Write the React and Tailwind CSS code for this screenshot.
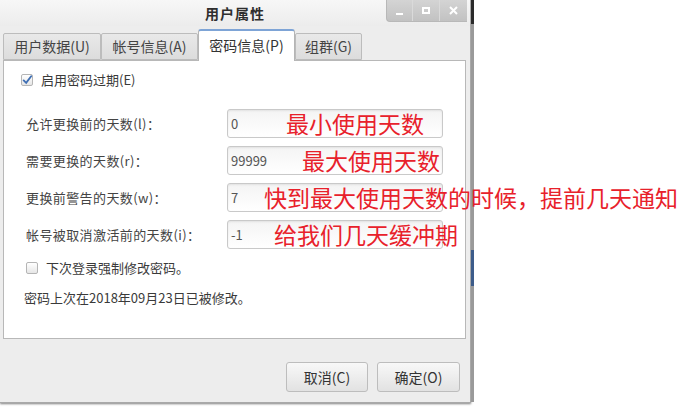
import React from "react";

const font = { fontFamily: '"Noto Sans CJK SC", "Noto Sans", sans-serif' };

const rows = [
  { label: "允许更换前的天数(l)：", value: "0", note: "最小使用天数", left: "left-[265px]" },
  { label: "需要更换的天数(r)：", value: "99999", note: "最大使用天数", left: "left-[281px]" },
  { label: "更换前警告的天数(w)：", value: "7", note: "快到最大使用天数的时候，提前几天通知", left: "left-[243px]" },
  { label: "帐号被取消激活前的天数(i)：", value: "-1", note: "给我们几天缓冲期", left: "left-[253px]" },
];

const tabs = [
  { label: "用户数据(U)", w: "w-[98px]" },
  { label: "帐号信息(A)", w: "w-[97px]" },
  { label: "密码信息(P)", w: "w-[97px]", active: true },
  { label: "组群(G)", w: "w-[67px]" },
];

function CheckBox({ checked }) {
  return (
    <span className="w-[12px] h-[12px] rounded-[2px] border border-[#b5b5b5] bg-gradient-to-b from-white to-[#e6e6e6] flex items-center justify-center">
      {checked && (
        <svg width="12" height="12" viewBox="0 0 12 12">
          <path d="M2 6.5 L5 9.5 L11 1.5" fill="none" stroke="#3f6fb4" strokeWidth="2.2" strokeLinecap="round" />
        </svg>
      )}
    </span>
  );
}

export default function App() {
  return (
    <div className="w-[688px] h-[420px] bg-white flex text-[#3a3a3a]" style={font}>
      {/* Dialog window */}
      <div className="w-[471px] h-[403px] bg-[#ededed] border-r border-b border-[#a9a9a9] shadow-[0_1px_2px_rgba(0,0,0,0.5)] flex flex-col">
        {/* Title bar */}
        <div className="relative h-[26px] bg-gradient-to-b from-[#f7f7f7] to-[#ececec] flex items-center justify-center">
          <span className="text-[14px] font-bold text-[#2e2e2e] tracking-[1px]">用户属性</span>
          <div className="absolute right-[3px] top-0 h-[22px] flex rounded-bl-[4px] overflow-hidden bg-gradient-to-b from-[#d4d4d4] to-[#c2c2c2] border-l border-b border-[#b8b8b8]">
            <div className="w-[26px] flex items-end justify-center pb-[6px] border-r border-[#dadada]">
              <span className="w-[7px] h-[2px] bg-white" />
            </div>
            <div className="w-[27px] flex items-center justify-center border-r border-[#dadada]">
              <span className="w-[8px] h-[7px] border-2 border-white" />
            </div>
            <div className="w-[27px] flex items-center justify-center">
              <svg width="9" height="9" viewBox="0 0 9 9">
                <path d="M1 1 L8 8 M8 1 L1 8" stroke="white" strokeWidth="2" />
              </svg>
            </div>
          </div>
        </div>

        {/* Tabs */}
        <div className="flex items-end h-[36px] pl-[3px] mt-[-2px]">
          {tabs.map((t) =>
            t.active ? (
              <div
                key={t.label}
                className={`${t.w} h-[32px] -mb-[1px] bg-white border border-b-0 border-[#b5b5b5] border-t-2 border-t-[#7ea4d6] rounded-t-[3px] flex items-center justify-center text-[14px] text-[#333] z-10 pb-[2px]`}
              >
                {t.label}
              </div>
            ) : (
              <div
                key={t.label}
                className={`${t.w} h-[27px] bg-gradient-to-b from-[#e9e9e9] to-[#dcdcdc] border border-[#bcbcbc] rounded-t-[2px] flex items-center justify-center text-[14px] text-[#444]`}
              >
                {t.label}
              </div>
            )
          )}
        </div>

        {/* Panel */}
        <div className="mx-[3px] mr-[4px] h-[279px] bg-white border border-[#b8b8b8] pl-[17px] pt-[11px] flex flex-col text-[13px]">
          <div className="flex items-center gap-[8px] h-[16px]">
            <CheckBox checked />
            <span>启用密码过期(E)</span>
          </div>

          <div className="mt-[21px] flex flex-col gap-[8px]">
            {rows.map((r) => (
              <div key={r.label} className="relative flex items-center h-[29px]">
                <span className="w-[206px] pl-[5px] text-[#444] tracking-[0.4px]">{r.label}</span>
                <div className="w-[216px] h-[29px] rounded-[3px] border border-[#c9c9c9] bg-gradient-to-b from-[#f4f4f4] to-white shadow-[inset_0_1px_2px_rgba(0,0,0,0.08)] flex items-center pl-[3px] text-[#555]">
                  {r.value}
                </div>
                <span className={`absolute ${r.left} top-[0px] whitespace-nowrap text-[23px] leading-[28px] text-[#e8212b]`}>
                  {r.note}
                </span>
              </div>
            ))}
          </div>

          <div className="mt-[11px] pl-[5px] flex items-center gap-[8px] h-[16px]">
            <CheckBox />
            <span>下次登录强制修改密码。</span>
          </div>
          <div className="mt-[14px] pl-[3px] h-[16px] flex items-center">密码上次在2018年09月23日已被修改。</div>
        </div>

        {/* Buttons */}
        <div className="flex justify-end gap-[9px] pr-[10px] mt-[23px]">
          <button className="w-[82px] h-[30px] rounded-[3px] border border-[#bdbdbd] bg-gradient-to-b from-[#f8f8f8] to-[#e2e2e2] text-[14px] text-[#333]">
            取消(C)
          </button>
          <button className="w-[83px] h-[30px] rounded-[3px] border border-[#bdbdbd] bg-gradient-to-b from-[#f8f8f8] to-[#e2e2e2] text-[14px] text-[#333]">
            确定(O)
          </button>
        </div>
      </div>

      {/* Edge of window behind */}
      <div className="w-[3px] h-[402px] flex flex-col">
        <div className="h-[24px] bg-[#2a2a2a]" />
        <div className="h-[226px] bg-[#9a9a9a]" />
        <div className="h-[36px] bg-[#3d5c8a]" />
        <div className="flex-1 bg-[#9a9a9a]" />
      </div>
    </div>
  );
}
